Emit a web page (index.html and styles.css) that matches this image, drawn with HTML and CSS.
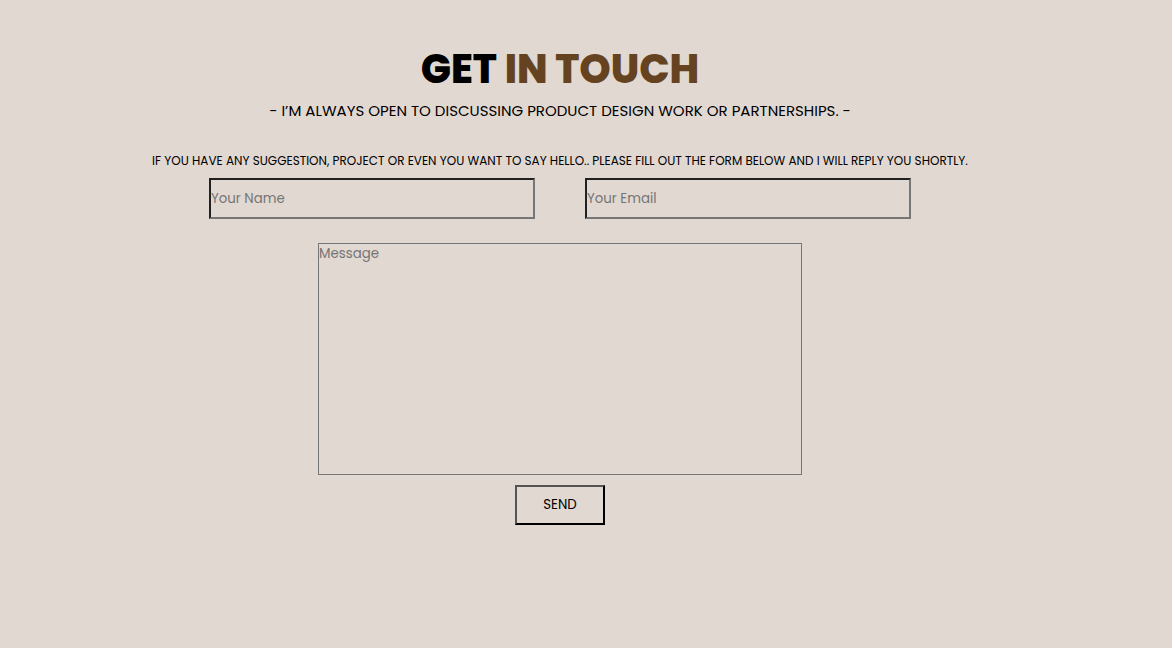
FILE: index.html
```html
<!DOCTYPE html>
<html lang="en">
<head>
<meta charset="utf-8">
<meta name="viewport" content="width=device-width, initial-scale=1">
<title>Get in touch</title>
<link rel="stylesheet" href="styles.css">
</head>
<body>
<main class="contact">
  <h1 class="title">GET <span class="accent">IN TOUCH</span></h1>
  <p class="lead">- I’M ALWAYS OPEN TO DISCUSSING PRODUCT DESIGN WORK OR PARTNERSHIPS. -</p>
  <p class="note">IF YOU HAVE ANY SUGGESTION, PROJECT OR EVEN YOU WANT TO SAY HELLO.. PLEASE FILL OUT THE FORM BELOW AND I WILL REPLY YOU SHORTLY.</p>
  <form class="form">
    <div class="fields">
      <input class="field" type="text" name="name" placeholder="Your Name" aria-label="Your Name">
      <input class="field" type="email" name="email" placeholder="Your Email" aria-label="Your Email">
    </div>
    <textarea class="message" name="message" placeholder="Message" aria-label="Message"></textarea>
    <button class="send" type="submit">SEND</button>
  </form>
</main>
</body>
</html>
```
FILE: styles.css
```css
* {
  box-sizing: border-box;
  margin: 0;
  padding: 0;
}

body {
  background: #e1d8d1;
  color: #000;
  font-family: Poppins, "Open Sans", "Noto Sans", sans-serif;
}

.contact {
  display: flex;
  flex-direction: column;
  align-items: center;
  padding: 40px 52px 40px 0;
  text-align: center;
}

.title {
  margin-bottom: 2px;
  font-family: Poppins, Inter, sans-serif;
  font-size: 40px;
  font-weight: 800;
  line-height: 58px;
}

.accent {
  color: #654321;
}

.lead {
  font-size: 15px;
  line-height: 22px;
}

.note {
  margin-top: 30px;
  font-size: 12px;
  line-height: 18px;
}

.form {
  display: flex;
  flex-direction: column;
  align-items: center;
  width: 100%;
  margin-top: 8px;
}

.fields {
  display: flex;
  gap: 50px;
  width: 100%;
  max-width: 702px;
}

.field {
  flex: 1;
  min-width: 0;
  height: 41px;
  border: 2px inset #767676;
  background: transparent;
  font-family: inherit;
}

.message {
  width: 100%;
  max-width: 484px;
  height: 232px;
  margin-top: 24px;
  border: 1px solid #767676;
  background: transparent;
  font-family: inherit;
  line-height: 20px;
  resize: none;
}

.field::placeholder,
.message::placeholder {
  color: #757575;
}

.send {
  margin-top: 10px;
  padding: 8px 26px;
  border: 2px outset #000;
  background: transparent;
  color: #000;
  font-family: inherit;
  line-height: 20px;
}
```
